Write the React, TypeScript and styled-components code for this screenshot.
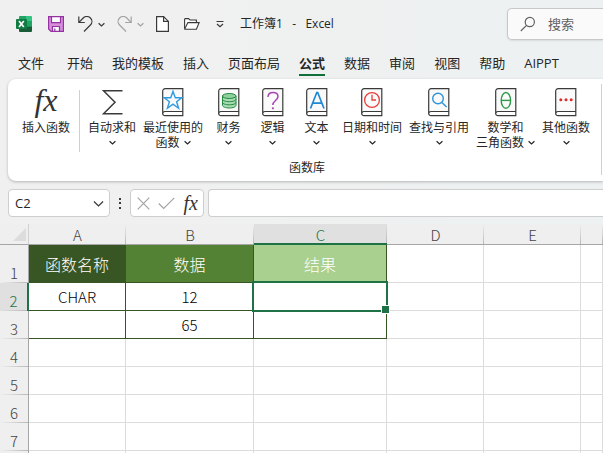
import React from "react";
import styled, { createGlobalStyle, css } from "styled-components";

const ui = `"Open Sans", "Noto Sans CJK SC", sans-serif`;
const cjk = `"Noto Sans CJK SC", sans-serif`;
const green = "#1f7246";
const ink = "#262626";

const GlobalStyle = createGlobalStyle`
  * { box-sizing: border-box; }
  body { margin: 0; background: #f0f0f0; }
  button, input { font: inherit; color: inherit; border: 0; padding: 0; margin: 0; background: none; }
  button { cursor: pointer; }
  svg { display: block; }
`;

const Window = styled.div`
  display: flex;
  flex-direction: column;
  height: 100vh;
  overflow: hidden;
  background: linear-gradient(90deg, #f0f0f0 20%, #eef1f1 75%);
  color: ${ink};
  font-family: ${ui};
  font-size: 12px;
`;

const TitleBar = styled.header`
  display: flex;
  align-items: center;
  height: 48px;
  padding-left: 16px;
  flex: none;
`;

const QuickTools = styled.div`
  display: flex;
  align-items: center;
  gap: 12px;
`;

const ToolPair = styled.div<{ $lead?: number }>`
  display: flex;
  align-items: center;
  gap: 5px;
  margin-left: ${(p) => p.$lead ?? 0}px;
`;

const IconButton = styled.button<{ $faded?: boolean; $lead?: number }>`
  && { margin-left: ${(p) => p.$lead ?? 0}px; }
  display: grid;
  place-items: center;
  flex: none;
  color: ${(p) => (p.$faded ? "#a3a3a3" : "#3a3a3a")};
`;

const DocTitle = styled.h1`
  margin: 0 0 0 16px;
  font-size: 12px;
  font-weight: 400;
  line-height: 20px;
  white-space: pre;
`;

const Search = styled.label`
  display: flex;
  align-items: center;
  gap: 12px;
  flex: 1;
  height: 32px;
  margin-left: auto;
  padding-left: 12px;
  max-width: 96px;
  border: 1px solid #c8c8c8;
  border-right: 0;
  border-radius: 5px 0 0 5px;
  background: #fafafa;
  box-shadow: 0 1px 2px #00000018;
  color: #616161;
  input {
    flex: 1;
    min-width: 0;
    font-size: 13px;
    line-height: 20px;
    outline: 0;
  }
  input::placeholder { color: #616161; opacity: 1; }
`;

const Tabs = styled.nav`
  display: flex;
  align-items: flex-start;
  gap: 19px;
  height: 31px;
  padding: 4px 0 0 18px;
  flex: none;
`;

const Tab = styled.button<{ $active?: boolean; $wide?: boolean }>`
  flex: none;
  font-size: 13px;
  line-height: 22px;
  white-space: nowrap;
  && { margin-right: ${(p) => (p.$wide ? 4 : 0)}px; }
  border-bottom: 2px solid ${(p) => (p.$active ? "#0f703b" : "transparent")};
  font-weight: ${(p) => (p.$active ? 700 : 400)};
`;

const Ribbon = styled.section`
  display: flex;
  flex: none;
  margin-left: 8px;
  height: 102px;
  padding: 5px 1px 6px 5px;
  background: #fff;
  border-radius: 8px 0 0 8px;
  box-shadow: 0 1px 3px #00000040;
`;

const Group = styled.div`
  display: flex;
  flex-direction: column;
  flex: 1;
  border-right: 1px solid #d0d0d0;
`;

const Commands = styled.div`
  display: flex;
  align-items: flex-start;
  gap: 1px;
  flex: 1;
  padding: 4px 0 0 6px;
`;

const GroupName = styled.div`
  text-align: center;
  line-height: 14px;
`;

const Command = styled.button`
  display: flex;
  flex-direction: column;
  align-items: center;
  flex: none;
  min-width: 43px;
  padding: 0 3px;
  line-height: 15px;
  white-space: nowrap;
  color: ${ink};
`;

const CommandArt = styled.span`
  display: flex;
  align-items: flex-start;
  height: 32px;
`;

const CommandLine = styled.span`
  display: flex;
  align-items: center;
  gap: 4px;
  height: 15px;
`;

const Fx = styled.span<{ $small?: boolean }>`
  font-family: "Liberation Serif", serif;
  font-style: italic;
  font-size: ${(p) => (p.$small ? 20 : 32)}px;
  line-height: 25px;
  color: #333;
`;

const Divider = styled.i`
  width: 1px;
  height: 62px;
  margin: 2px 4px 0 5px;
  background: #d0d0d0;
`;

const FormulaBar = styled.div`
  display: flex;
  align-items: center;
  flex: none;
  height: 28px;
  margin: 8px 0 7px 8px;
`;

const field = css`
  height: 28px;
  border: 1px solid #cecece;
  border-radius: 4px;
  background: #fff;
`;

const NameBox = styled.div`
  ${field}
  display: flex;
  align-items: center;
  width: 102px;
  padding: 0 5px 0 6px;
  input {
    flex: 1;
    min-width: 0;
    font-size: 13px;
    outline: 0;
  }
`;

const Grip = styled.span`
  display: grid;
  place-items: center;
  width: 20px;
`;

const FormulaTools = styled.div`
  ${field}
  display: flex;
  align-items: center;
  justify-content: space-between;
  width: 74px;
  padding: 0 5px 0 6px;
`;

const FormulaInput = styled.input`
  && {
    ${field}
    flex: 1;
    min-width: 0;
    margin-left: 4px;
    padding: 0 8px;
    border-right: 0;
    border-radius: 4px 0 0 4px;
    outline: 0;
  }
`;

const SheetArea = styled.main`
  flex: 1;
  overflow: hidden;
  background: #fff;
`;

const Sheet = styled.table`
  width: 100%;
  table-layout: fixed;
  border-collapse: separate;
  border-spacing: 0;
  font-family: ${cjk};
  font-size: 15px;
  font-weight: 300;
  line-height: 20px;
  th, td { padding: 0; font-weight: 300; }
`;

const Col = styled.col<{ $w?: number }>`
  width: ${(p) => (p.$w ? `${p.$w}px` : "auto")};
`;

const ColHead = styled.th<{ $active?: boolean }>`
  height: 21px;
  line-height: ${(p) => (p.$active ? 17 : 19)}px;
  vertical-align: bottom;
  color: ${(p) => (p.$active ? green : "#444")};
  background:
    linear-gradient(transparent, #b8b8b8) right / 1px 100% no-repeat,
    ${(p) => (p.$active ? "#e0e0e0" : "#efefef")};
  border-bottom: ${(p) => (p.$active ? `2px solid ${green}` : "1px solid #a6a6a6")};
`;

const Corner = styled.th`
  height: 21px;
  background: #efefef;
  border-right: 1px solid #d0d0d0;
  border-bottom: 1px solid #a6a6a6;
  && button { display: block; margin: 0 2px 0 auto; }
`;

const RowHead = styled.th<{ $active?: boolean }>`
  vertical-align: bottom;
  text-align: center;
  color: ${(p) => (p.$active ? green : "#444")};
  background:
    linear-gradient(90deg, transparent, #b8b8b8) bottom / 100% 1px no-repeat,
    ${(p) => (p.$active ? "#e0e0e0" : "#efefef")};
  border-right: ${(p) => (p.$active ? `2px solid ${green}` : "1px solid #a6a6a6")};
`;

const Row = styled.tr<{ $tall?: boolean }>`
  height: ${(p) => (p.$tall ? 38 : 28)}px;
`;

const Cell = styled.td<{ $fill?: string; $framed?: boolean }>`
  position: relative;
  text-align: center;
  vertical-align: middle;
  color: ${(p) => (p.$fill ? "#fff" : "#000")};
  font-size: ${(p) => (p.$fill ? 16 : 15)}px;
  background: ${(p) => p.$fill ?? "#fff"};
  border-right: 1px solid ${(p) => (p.$framed ? "#375623" : "#dcdcdc")};
  border-bottom: 1px solid ${(p) => (p.$framed ? "#375623" : "#dcdcdc")};
`;

const Selection = styled.span`
  position: absolute;
  inset: -2px;
  z-index: 1;
  border: 2px solid ${green};
  &::after {
    content: "";
    position: absolute;
    right: -4px;
    bottom: -4px;
    width: 7px;
    height: 7px;
    border: 1px solid #fff;
    background: ${green};
  }
`;

const Chevron = ({ size = 7 }: { size?: number }) => (
  <svg width={size} height={size} viewBox="0 0 7 7" fill="none" stroke="currentColor" strokeWidth={size > 8 ? 0.8 : 1.2}>
    <path d="M.6 2.200 3.500 5l2.900-2.800" />
  </svg>
);

const ExcelLogo = () => (
  <svg width="16" height="16" viewBox="0 0 16 16" role="img" aria-label="Excel">
    <path d="M4 0h6v6H3V1a1 1 0 0 1 1-1z" fill="#21a366" />
    <path d="M10 0h5a1 1 0 0 1 1 1v4h-6z" fill="#33c481" />
    <path d="M3 5h7v6H3z" fill="#107c41" />
    <path d="M10 5h6v6h-6z" fill="#21a366" />
    <path d="M3 11h13v4a1 1 0 0 1-1 1H4a1 1 0 0 1-1-1z" fill="#185c37" />
    <path d="M10 10.500h6V11h-6z" fill="#107c41" />
    <rect y="3" width="11" height="10" rx="1" fill="#107c41" />
    <path d="m3 5 4.800 6M7.800 5 3 11" stroke="#fff" strokeWidth="1.700" />
  </svg>
);

const SaveIcon = () => (
  <svg width="16" height="16" viewBox="0 0 16 16" stroke="#9332a0" strokeWidth="1.200">
    <path d="M.6.600h14.800v14.800H3L.6 13z" fill="#d78fdc" />
    <path d="M3.500.600h9v6h-9z" fill="#fff" />
    <path d="M4.500 10.500h7v4.900h-7z" fill="#fff" />
    <path d="M6.800 12.500v2.900" />
  </svg>
);

const UndoIcon = () => (
  <svg width="15" height="16" viewBox="0 0 15 16" fill="none" stroke="currentColor" strokeWidth="1.200">
    <path d="M.8.500v6h6M1 6.300 5.200 2a5 5 0 0 1 7.200 0c2 2 2 5 0 7L6 15.500" />
  </svg>
);

const RedoIcon = () => (
  <svg width="15" height="16" viewBox="0 0 15 16" fill="none" stroke="currentColor" strokeWidth="1.200">
    <path d="M14.200.500v6h-6M14 6.300 9.800 2a5 5 0 0 0-7.200 0c-2 2-2 5 0 7L9 15.500" />
  </svg>
);

const NewIcon = () => (
  <svg width="13" height="16" viewBox="0 0 13 16" fill="#fff" stroke="currentColor" strokeWidth="1.200">
    <path d="M.6.600h7l4.800 4.800v10H.6z" />
    <path d="M7.600.600v4.800h4.800" fill="none" />
  </svg>
);

const OpenIcon = () => (
  <svg width="16" height="12" viewBox="0 0 16 12" fill="#fff" stroke="currentColor" strokeWidth="1.100">
    <path d="M.6 10.800V1.200L1.200.600h3.300L6 2h6.400v2.600" />
    <path d="m.7 11 3.200-6.400h11.200L12.400 11.200H1z" />
  </svg>
);

const CustomizeIcon = () => (
  <svg width="8" height="8" viewBox="0 0 8 8" fill="none" stroke="currentColor" strokeWidth="1.200">
    <path d="M.5 1.500h7M1 4l3 2.700L7 4" />
  </svg>
);

const SearchIcon = () => (
  <svg width="16" height="16" viewBox="0 0 16 16" fill="none" stroke="currentColor" strokeWidth="1.200">
    <circle cx="9.800" cy="6" r="4.600" />
    <path d="M6.500 9.300.8 15" />
  </svg>
);

const SigmaIcon = () => (
  <svg width="21" height="27" viewBox="0 0 21 27" fill="none" stroke="#3a3a3a" strokeWidth="1.500">
    <path d="M20.500 2.700H1.500L13 14.200 1.500 25.700h19" />
  </svg>
);

const Book = ({ children }: { children: React.ReactNode }) => (
  <svg width="22" height="29" viewBox="0 0 22 29" fill="none">
    <path d="M3.200.700h17.600v22.800H3.200a2.400 2.400 0 0 0-2.500 2.300V3.200A2.500 2.500 0 0 1 3.200.700z" fill="#fafafa" />
    <path d="M20.800 23.500v4.200H3a2.200 2.200 0 0 1 0-4.200" fill="#fff" />
    <path d="M3.200 23.500h17.600V.700H3.200A2.500 2.500 0 0 0 .7 3.200v22.400a2.200 2.200 0 0 0 2.300 2.100h17.800v-4.200M.7 25.600a2.200 2.200 0 0 1 2.500-2.100" stroke="#3a3a3a" strokeWidth="1.200" />
    {children}
  </svg>
);

const glyphs: Record<string, React.ReactNode> = {
  star: <path d="m11 3.400 2.300 6.300h6.500l-5.200 4 2 6.500-5.600-4-5.600 4 2-6.500-5.200-4h6.500z" stroke="#2f9be0" strokeWidth="1.400" />,
  coins: (
    <g stroke="#23883d" strokeWidth="1">
      <path d="M4.500 8v9.300c0 1.500 3 2.700 6.800 2.700s6.700-1.200 6.700-2.700V8z" fill="#a9dcb5" />
      <ellipse cx="11.250" cy="8" rx="6.750" ry="2.500" fill="#8fd19f" />
      <path d="M4.500 11.200c0 1.400 3 2.500 6.800 2.500s6.700-1.100 6.700-2.500M4.500 14.300c0 1.400 3 2.500 6.800 2.500s6.700-1.100 6.700-2.500" />
    </g>
  ),
  question: (
    <g stroke="#a845b5" strokeWidth="1.500">
      <path d="M6 9c0-3 2.200-4.600 5-4.600s5 1.600 5 4.100c0 3.800-5.200 4.200-5.200 8.500" />
      <path d="M9.900 19.300h1.900v1.900H9.900z" fill="#a845b5" stroke="none" />
    </g>
  ),
  letter: <path d="M4.500 20.500 10.800 4.500h.9L18 20.500M7 15.200h8.500" stroke="#1e88d4" strokeWidth="1.700" />,
  clock: (
    <g stroke="#e8403c" strokeWidth="1.300">
      <circle cx="11" cy="12" r="7.400" />
      <path d="M11 6.800V12h4" />
    </g>
  ),
  lens: (
    <g stroke="#2f93d8" strokeWidth="1.400">
      <circle cx="10" cy="10.500" r="5.300" />
      <path d="m13.900 14.400 4.700 4.700" />
    </g>
  ),
  theta: (
    <g stroke="#2e9b4b" strokeWidth="1.400">
      <ellipse cx="10.900" cy="12.400" rx="4.700" ry="7.900" />
      <path d="M6.200 12.400h9.400" />
    </g>
  ),
  dots: (
    <g fill="#e02b2b">
      <circle cx="5.800" cy="11.700" r="1.500" />
      <circle cx="11" cy="11.700" r="1.500" />
      <circle cx="16.200" cy="11.700" r="1.500" />
    </g>
  ),
};

const commands = [
  { lines: ["自动求和"], glyph: "sigma" },
  { lines: ["最近使用的", "函数"], glyph: "star" },
  { lines: ["财务"], glyph: "coins" },
  { lines: ["逻辑"], glyph: "question" },
  { lines: ["文本"], glyph: "letter" },
  { lines: ["日期和时间"], glyph: "clock" },
  { lines: ["查找与引用"], glyph: "lens" },
  { lines: ["数学和", "三角函数"], glyph: "theta" },
  { lines: ["其他函数"], glyph: "dots" },
];

const tabs = ["文件", "开始", "我的模板", "插入", "页面布局", "公式", "数据", "审阅", "视图", "帮助", "AIPPT"];
const columns = ["A", "B", "C", "D", "E", ""];
const widths = [29, 97, 128, 133, 97, 97, undefined];
const fills = ["#375623", "#548235", "#a9d08e"];
const rows = [["函数名称", "数据", "结果"], ["CHAR", "12", ""], ["", "65", ""], [], [], [], []];

export default function App() {
  return (
    <Window>
      <GlobalStyle />
      <TitleBar>
        <QuickTools>
          <ExcelLogo />
          <IconButton $lead={4} aria-label="保存"><SaveIcon /></IconButton>
          <ToolPair $lead={2}>
            <IconButton aria-label="撤消"><UndoIcon /></IconButton>
            <IconButton aria-label="撤消列表"><Chevron /></IconButton>
          </ToolPair>
          <ToolPair>
            <IconButton $faded aria-label="恢复"><RedoIcon /></IconButton>
            <IconButton $faded aria-label="恢复列表"><Chevron /></IconButton>
          </ToolPair>
          <IconButton aria-label="新建"><NewIcon /></IconButton>
          <IconButton $lead={3} aria-label="打开"><OpenIcon /></IconButton>
          <IconButton $lead={4} aria-label="自定义快速访问工具栏"><CustomizeIcon /></IconButton>
        </QuickTools>
        <DocTitle>{"工作簿1   -   Excel"}</DocTitle>
        <Search>
          <SearchIcon />
          <input type="search" placeholder="搜索" aria-label="搜索" />
        </Search>
      </TitleBar>

      <Tabs>
        {tabs.map((t, i) => (
          <Tab key={t} $active={t === "公式"} $wide={i === 0}>{t}</Tab>
        ))}
      </Tabs>

      <Ribbon>
        <Group>
          <Commands>
            <Command>
              <CommandArt><Fx>fx</Fx></CommandArt>
              <CommandLine>插入函数</CommandLine>
            </Command>
            <Divider />
            {commands.map(({ lines, glyph }) => (
              <Command key={glyph}>
                <CommandArt>{glyph === "sigma" ? <SigmaIcon /> : <Book>{glyphs[glyph]}</Book>}</CommandArt>
                <CommandLine>{lines[0]}</CommandLine>
                <CommandLine>{lines[1]}<Chevron /></CommandLine>
              </Command>
            ))}
          </Commands>
          <GroupName>函数库</GroupName>
        </Group>
      </Ribbon>

      <FormulaBar>
        <NameBox>
          <input aria-label="名称框" defaultValue="C2" />
          <IconButton aria-label="名称列表"><Chevron size={11} /></IconButton>
        </NameBox>
        <Grip>
          <svg width="2" height="11" viewBox="0 0 2 11" fill="#3a3a3a">
            <path d="M0 0h2v2H0zM0 4h2v2H0zM0 9h2v2H0z" />
          </svg>
        </Grip>
        <FormulaTools>
          <IconButton $faded aria-label="取消">
            <svg width="13" height="13" viewBox="0 0 13 13" stroke="currentColor" strokeWidth="1.200"><path d="m.7.700 11.600 11.600M12.300.700.7 12.300" /></svg>
          </IconButton>
          <IconButton $faded aria-label="输入">
            <svg width="17" height="13" viewBox="0 0 17 13" fill="none" stroke="currentColor" strokeWidth="1.200"><path d="m.7 6.500 5 5L16.300.900" /></svg>
          </IconButton>
          <IconButton aria-label="插入函数"><Fx $small>fx</Fx></IconButton>
        </FormulaTools>
        <FormulaInput aria-label="编辑栏" />
      </FormulaBar>

      <SheetArea>
        <Sheet>
          <colgroup>
            {widths.map((w, i) => <Col key={i} $w={w} />)}
          </colgroup>
          <thead>
            <tr>
              <Corner>
                <button aria-label="全选">
                  <svg width="13" height="13" viewBox="0 0 13 13" fill="#dcdcdc"><path d="M13 0v13H0z" /></svg>
                </button>
              </Corner>
              {columns.map((c, i) => <ColHead key={i} scope="col" $active={c === "C"}>{c}</ColHead>)}
            </tr>
          </thead>
          <tbody>
            {rows.map((values, r) => (
              <Row key={r} $tall={r === 0}>
                <RowHead scope="row" $active={r === 1}>{r + 1}</RowHead>
                {columns.map((_, c) => (
                  <Cell key={c} $fill={r === 0 ? fills[c] : undefined} $framed={r < 3 && c < 3}>
                    {values[c]}
                    {r === 1 && c === 2 && <Selection />}
                  </Cell>
                ))}
              </Row>
            ))}
            <Row>
              <RowHead />
              {columns.map((_, c) => <Cell key={c} />)}
            </Row>
          </tbody>
        </Sheet>
      </SheetArea>
    </Window>
  );
}
